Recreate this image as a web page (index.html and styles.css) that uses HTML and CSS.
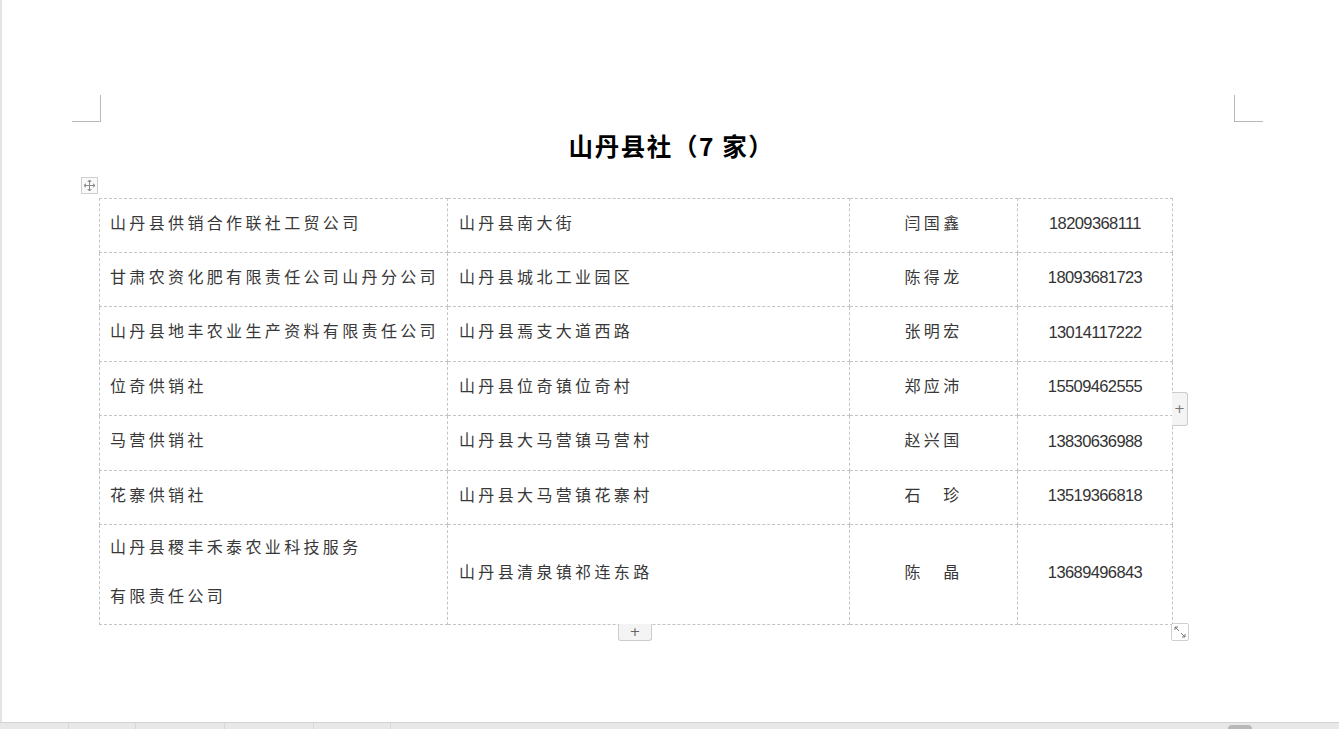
FILE: index.html
```html
<!DOCTYPE html>
<html lang="zh-CN">
<head>
<meta charset="utf-8">
<title>山丹县社</title>
<link rel="stylesheet" href="styles.css">
</head>
<body>
<div class="app">
  <div class="page">
    <div class="marks">
      <span class="mark mark-left"></span>
      <span class="mark mark-right"></span>
    </div>
    <h1 class="title">山丹县社（7 家）</h1>
    <div class="handle-row">
      <span class="move-handle">
        <svg width="13" height="13" viewBox="0 0 13 13" fill="none" stroke="#8a8a8a" stroke-width="1">
          <path d="M6.5 1v11M1 6.5h11"/>
          <path d="M4.8 2.8L6.5 1l1.7 1.8M4.8 10.2L6.5 12l1.7-1.8M2.8 4.8L1 6.5l1.8 1.7M10.2 4.8L12 6.5l-1.8 1.7" fill="#8a8a8a"/>
        </svg>
      </span>
    </div>
    <div class="table-wrap">
      <table class="grid">
        <colgroup>
          <col class="c1"><col class="c2"><col class="c3"><col class="c4">
        </colgroup>
        <tbody>
          <tr class="r54"><td class="left">山丹县供销合作联社工贸公司</td><td class="left">山丹县南大街</td><td class="center">闫国鑫</td><td class="num">18209368111</td></tr>
          <tr class="r54"><td class="left">甘肃农资化肥有限责任公司山丹分公司</td><td class="left">山丹县城北工业园区</td><td class="center">陈得龙</td><td class="num">18093681723</td></tr>
          <tr class="r55"><td class="left">山丹县地丰农业生产资料有限责任公司</td><td class="left">山丹县焉支大道西路</td><td class="center">张明宏</td><td class="num">13014117222</td></tr>
          <tr class="r54"><td class="left">位奇供销社</td><td class="left">山丹县位奇镇位奇村</td><td class="center">郑应沛</td><td class="num">15509462555</td></tr>
          <tr class="r55"><td class="left">马营供销社</td><td class="left">山丹县大马营镇马营村</td><td class="center">赵兴国</td><td class="num">13830636988</td></tr>
          <tr class="r54"><td class="left">花寨供销社</td><td class="left">山丹县大马营镇花寨村</td><td class="center">石&emsp;珍</td><td class="num">13519366818</td></tr>
          <tr class="r100"><td class="left two-line"><div class="l1">山丹县稷丰禾泰农业科技服务</div><div class="l2">有限责任公司</div></td><td class="left">山丹县清泉镇祁连东路</td><td class="center">陈&emsp;晶</td><td class="num">13689496843</td></tr>
        </tbody>
      </table>
      <span class="add-col">+</span>
      <span class="add-row">+</span>
      <span class="resize">
        <svg width="14" height="14" viewBox="0 0 14 14" fill="none" stroke="#777" stroke-width="1">
          <path d="M2 2l4 4M2 2h3M2 2v3"/>
          <path d="M12 12L8 8M12 12H9M12 12V9"/>
        </svg>
      </span>
    </div>
  </div>
  <div class="statusbar">
    <span class="seg s1"></span><span class="seg s2"></span><span class="seg s3"></span><span class="seg s4"></span><span class="seg s5"></span>
    <span class="thumb"></span>
  </div>
</div>
</body>
</html>
```

FILE: styles.css
```css
html, body {
  margin: 0;
  padding: 0;
  background: #ffffff;
}

body {
  font-family: "Noto Sans CJK SC", "Liberation Sans", sans-serif;
  color: #333333;
}

.app {
  width: 1339px;
  height: 729px;
  display: flex;
  flex-direction: column;
  overflow: hidden;
}

.page {
  flex: 1;
  box-sizing: border-box;
  border-left: 2px solid #e4e4e4;
  padding-top: 95px;
  display: flex;
  flex-direction: column;
}

.marks {
  display: flex;
  justify-content: space-between;
  padding: 0 76px 0 70px;
}

.mark {
  display: block;
  width: 29px;
  height: 27px;
  box-sizing: border-box;
  border-bottom: 1px solid #b9b9b9;
}

.mark-left {
  border-right: 1px solid #b9b9b9;
}

.mark-right {
  border-left: 1px solid #b9b9b9;
}

.title {
  margin: 8px 0 0 104px;
  width: 1131px;
  text-align: center;
  font-family: "Noto Sans CJK SC", sans-serif;
  font-weight: 700;
  font-size: 24.5px;
  line-height: 32px;
  letter-spacing: 1.6px;
  color: #000000;
}

.handle-row {
  display: flex;
  margin-top: 15px;
  padding-left: 79px;
  height: 18px;
}

.move-handle {
  width: 17px;
  height: 17px;
  box-sizing: border-box;
  border: 1px solid #cfcfcf;
  background: #fafafa;
  display: flex;
  align-items: center;
  justify-content: center;
}

.table-wrap {
  position: relative;
  margin-top: 3px;
  margin-left: 97px;
  width: 1073px;
}

.grid {
  border-collapse: collapse;
  table-layout: fixed;
  width: 1073px;
}

.c1 { width: 348px; }
.c2 { width: 402px; }
.c3 { width: 168px; }
.c4 { width: 155px; }

.grid td {
  border: 1px dashed #c4c4c4;
  padding: 0 0 8px 0;
  font-size: 16px;
  letter-spacing: 3.35px;
  white-space: nowrap;
  vertical-align: middle;
  color: #383838;
}

.r54 td { height: 45px; }
.r55 td { height: 46px; }
.r100 td { height: 91px; }

.grid td.num { padding-bottom: 4px; }
.r54 td.num { height: 49px; }
.r55 td.num { height: 50px; }
.r100 td.num { height: 95px; }

.grid td.two-line {
  padding-bottom: 0;
  height: 99px;
}

.left {
  padding-left: 10px !important;
  text-align: left;
}

.grid td:nth-child(2).left {
  padding-left: 11px !important;
}

.center {
  text-align: center;
}

.num {
  text-align: center;
  font-family: "Liberation Sans", sans-serif;
  font-size: 16.5px !important;
  letter-spacing: -0.6px !important;
  color: #333333 !important;
}

.two-line .l1 {
  line-height: 42px;
}

.two-line .l2 {
  line-height: 57px;
}

.add-col {
  position: absolute;
  left: 1073px;
  top: 194px;
  width: 16px;
  height: 34px;
  box-sizing: border-box;
  border: 1px solid #cccccc;
  border-left: none;
  border-radius: 0 3px 3px 0;
  background: #f4f4f4;
  color: #777;
  font-family: "DejaVu Sans", sans-serif;
  font-size: 13px;
  line-height: 32px;
  text-align: center;
}

.add-row {
  position: absolute;
  left: 519px;
  top: 426px;
  width: 34px;
  height: 17px;
  box-sizing: border-box;
  border: 1px solid #cccccc;
  border-top: none;
  border-radius: 0 0 3px 3px;
  background: #f4f4f4;
  color: #666;
  font-family: "DejaVu Sans", sans-serif;
  font-size: 13px;
  line-height: 16px;
  text-align: center;
}

.resize {
  position: absolute;
  left: 1072px;
  top: 425px;
  width: 18px;
  height: 18px;
  box-sizing: border-box;
  border: 1px solid #d0d0d0;
  border-radius: 2px;
  background: #ffffff;
  display: flex;
  align-items: center;
  justify-content: center;
}

.statusbar {
  height: 7px;
  box-sizing: border-box;
  border-top: 1px solid #d2d2d2;
  background: #e8e8e8;
  display: flex;
  position: relative;
}

.seg {
  display: block;
  border-right: 1px solid #d8d8d8;
  height: 6px;
}

.s1 { width: 68px; }
.s2 { width: 66px; }
.s3 { width: 88px; }
.s4 { width: 88px; }
.s5 { width: 76px; }

.thumb {
  position: absolute;
  left: 1228px;
  top: 2px;
  width: 24px;
  height: 8px;
  border-radius: 4px;
  background: #b8b8b8;
}
```
